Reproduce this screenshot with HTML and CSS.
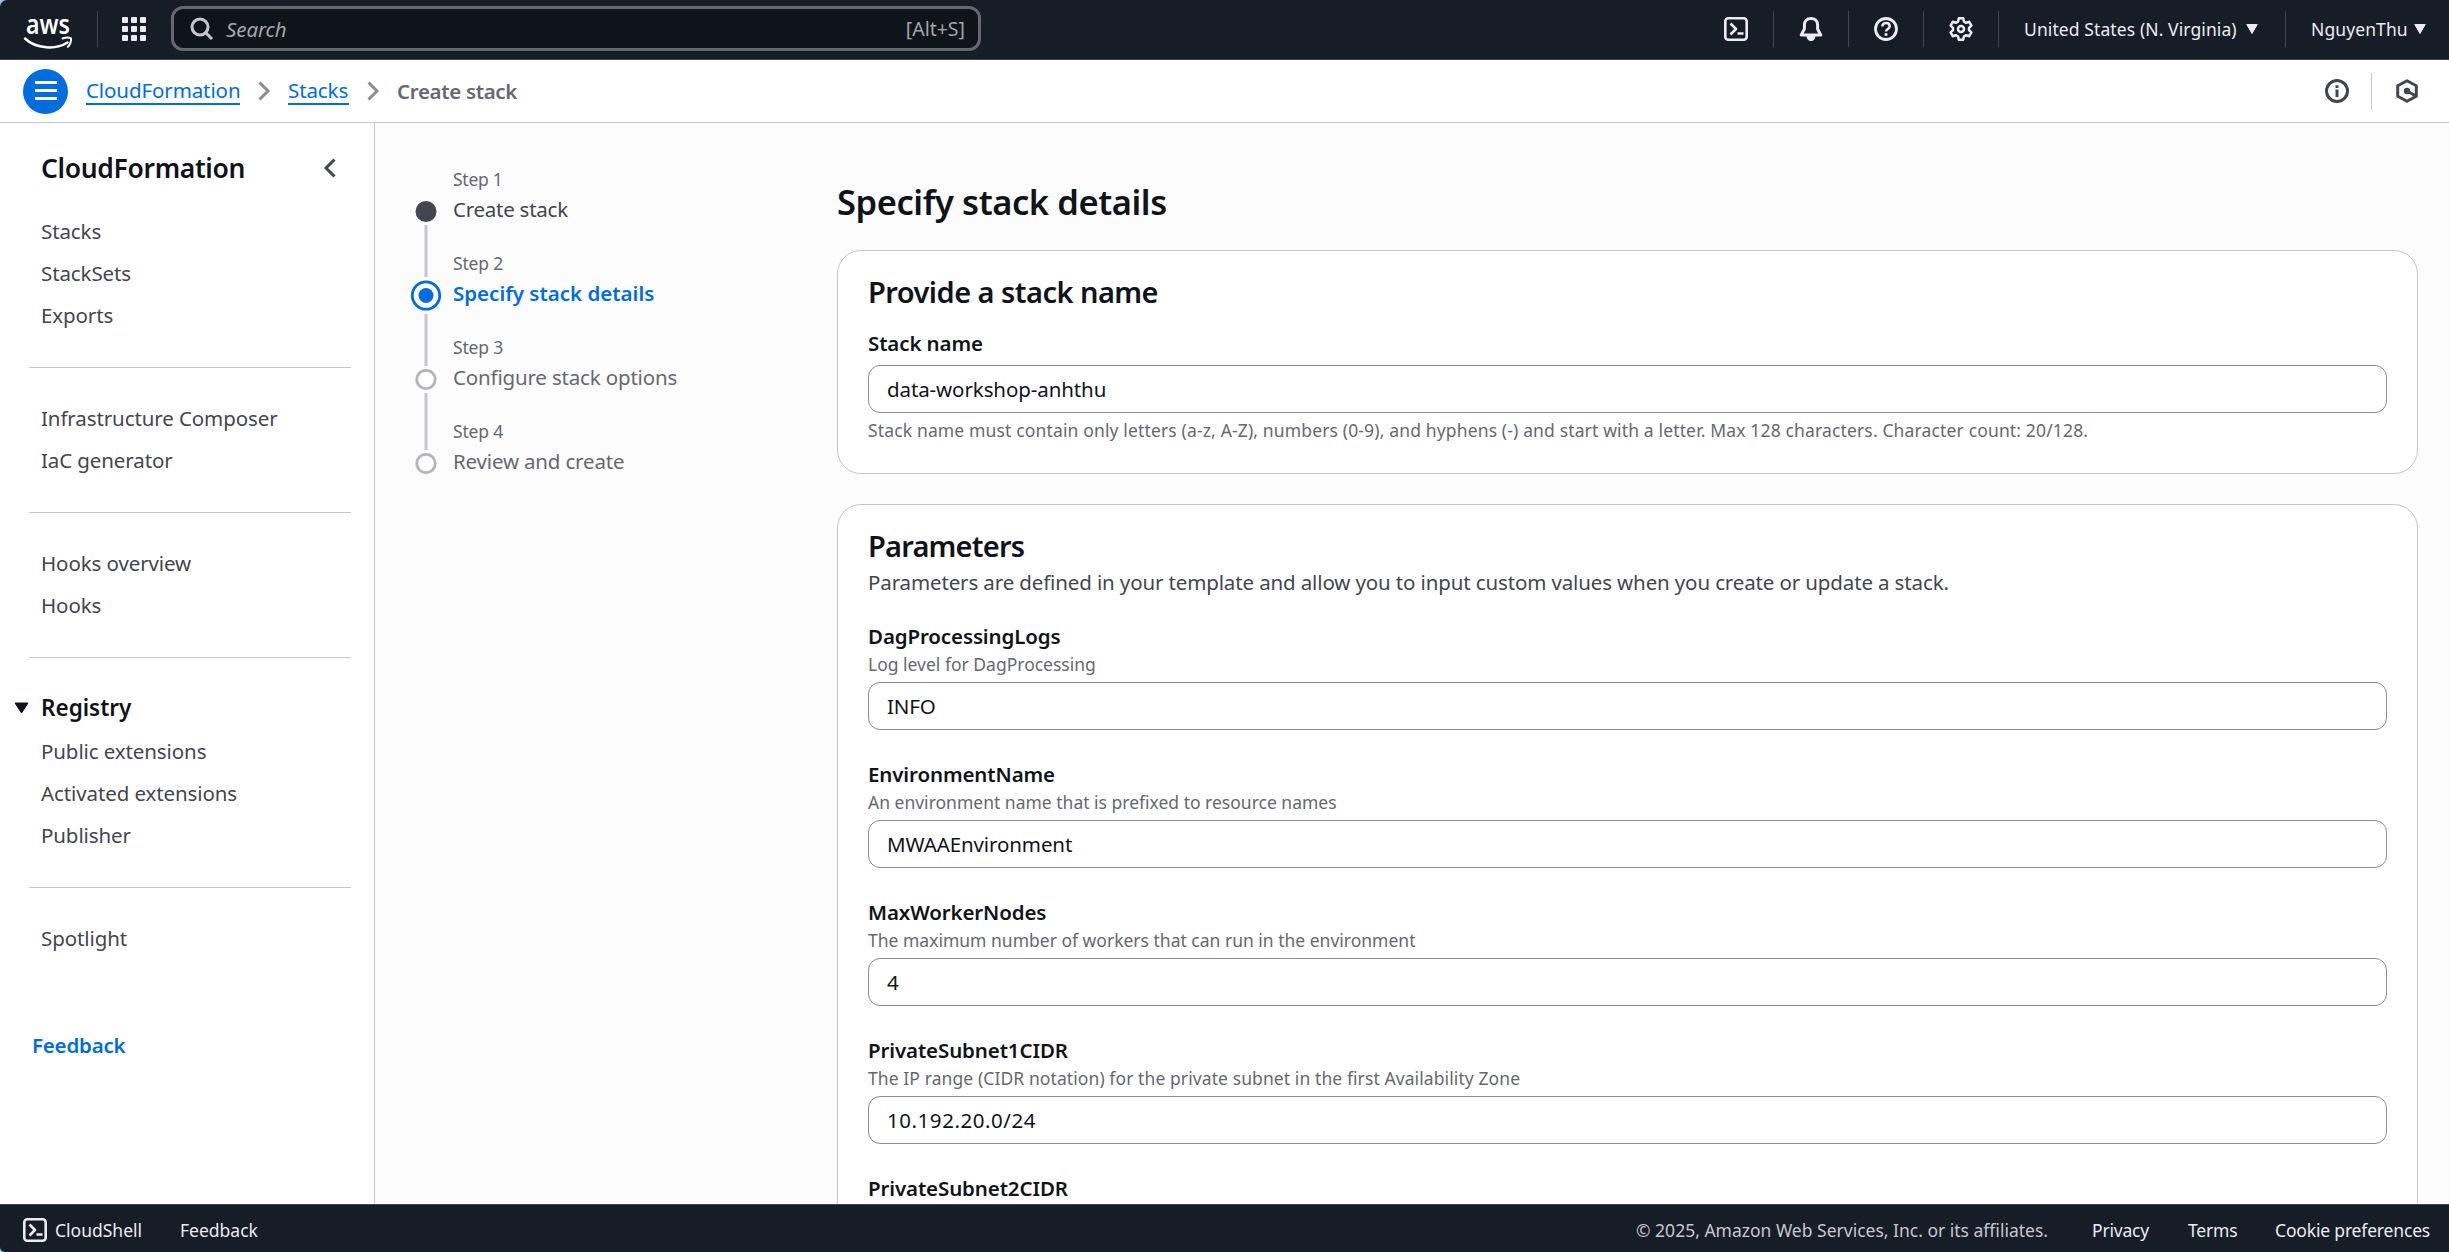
FILE: index.html
```html
<!DOCTYPE html>
<html lang="en">
<head>
<meta charset="utf-8">
<title>Specify stack details | CloudFormation</title>
<link rel="stylesheet" href="styles.css">
</head>
<body>
<header class="topbar">
  <a class="logo" aria-label="AWS">
    <svg width="50" height="36" viewBox="0 0 50 36"><text class="logo-text" x="3" y="22" textLength="44" lengthAdjust="spacingAndGlyphs">aws</text><path d="M2 26.5C13 37 33 38 44.500 30.500" fill="none" stroke="#fff" stroke-width="2.500" stroke-linecap="round"/><path d="M39.500 26.500C43 25.300 46 25.300 48 26.300C48.500 29 47 33 44.800 34.800" fill="none" stroke="#fff" stroke-width="2" stroke-linecap="round" stroke-linejoin="round"/></svg>
  </a>
  <span class="rule rule-logo"></span>
  <svg class="apps" width="24" height="24" viewBox="0 0 24 24" fill="#ebebf0"><rect width="6" height="6" rx="1"/><rect x="9" width="6" height="6" rx="1"/><rect x="18" width="6" height="6" rx="1"/><rect y="9" width="6" height="6" rx="1"/><rect x="9" y="9" width="6" height="6" rx="1"/><rect x="18" y="9" width="6" height="6" rx="1"/><rect y="18" width="6" height="6" rx="1"/><rect x="9" y="18" width="6" height="6" rx="1"/><rect x="18" y="18" width="6" height="6" rx="1"/></svg>
  <div class="search">
    <svg width="24" height="24" viewBox="0 0 24 24" fill="none" stroke="#c6c6cd" stroke-width="3"><circle cx="10" cy="10" r="8"/><path d="M15.500 15.500L22 22"/></svg>
    <span class="search-hint">Search</span>
    <span class="search-key">[Alt+S]</span>
  </div>
  <div class="tools">
    <svg width="24" height="24" viewBox="0 0 24 24" fill="none" stroke="#ebebf0" stroke-width="2.600" stroke-linejoin="round"><rect x="1.300" y="1.300" width="21.400" height="21.400" rx="3"/><path d="M6.500 6.500L12 12L6.500 17.500M13.500 16.500H19.500"/></svg>
    <span class="rule"></span>
    <svg width="24" height="24" viewBox="0 0 24 24"><path d="M12 1.500C7.800 1.500 5.400 4.300 5.400 8V12L2.200 18H21.800L18.600 12V8C18.600 4.300 16.200 1.500 12 1.500Z" fill="none" stroke="#ebebf0" stroke-width="3" stroke-linejoin="round"/><path d="M7.500 18.500H16.500C16.500 22 14.500 24 12 24S7.500 22 7.500 18.500Z" fill="#ebebf0"/></svg>
    <span class="rule"></span>
    <svg width="24" height="24" viewBox="0 0 24 24" fill="none" stroke="#ebebf0" stroke-width="2.800"><circle cx="12" cy="12" r="10.500"/><path d="M8.300 9.600C8.300 7.200 9.800 6.100 12 6.100S15.700 7.300 15.700 9.300C15.700 11.900 12 11.900 12 14.500" stroke-width="2.500"/><path d="M12 16.200V18.800" stroke-width="2.800"/></svg>
    <span class="rule"></span>
    <svg width="24" height="24" viewBox="0 0 24 24" fill="none" stroke="#ebebf0" stroke-width="2.500" stroke-linejoin="round"><path d="M9.800 1.300H14.200L14.900 4.500L17.100 5.800L20.200 4.800L22.400 8.600L20 10.800V13.200L22.400 15.400L20.200 19.200L17.100 18.200L14.900 19.500L14.200 22.700H9.800L9.100 19.500L6.900 18.200L3.800 19.200L1.600 15.400L4 13.200V10.800L1.600 8.600L3.800 4.800L6.900 5.800L9.100 4.500Z"/><circle cx="12" cy="12" r="3"/></svg>
    <span class="rule"></span>
    <span class="region">United States (N. Virginia)</span>
    <svg class="caret" width="12" height="10" viewBox="0 0 12 10"><path d="M.8.500H11.200L6 9.500Z" fill="#ebebf0" stroke="#ebebf0" stroke-linejoin="round"/></svg>
    <span class="rule rule-user"></span>
    <span class="user">NguyenThu</span>
    <svg class="caret" width="12" height="10" viewBox="0 0 12 10"><path d="M.8.500H11.200L6 9.500Z" fill="#ebebf0" stroke="#ebebf0" stroke-linejoin="round"/></svg>
  </div>
</header>

<div class="crumbbar">
  <span class="menu"><svg width="22" height="20" viewBox="0 0 22 20" fill="#fff"><rect width="22" height="3"/><rect y="8" width="22" height="3"/><rect y="16" width="22" height="3"/></svg></span>
  <nav class="crumbs">
    <a class="crumb-service">CloudFormation</a>
    <svg width="12" height="20" viewBox="0 0 12 20"><path d="M1.500 1.500L10 10L1.500 18.500" fill="none" stroke="#8c8c94" stroke-width="3"/></svg>
    <a class="crumb-stacks">Stacks</a>
    <svg width="12" height="20" viewBox="0 0 12 20"><path d="M1.500 1.500L10 10L1.500 18.500" fill="none" stroke="#8c8c94" stroke-width="3"/></svg>
    <b>Create stack</b>
  </nav>
  <svg class="info" width="24" height="24" viewBox="0 0 24 24" fill="none" stroke="#424650" stroke-width="3"><circle cx="12" cy="12" r="10.500"/><path d="M12 6.300V9M12 10.500V18"/></svg>
  <span class="rule-light"></span>
  <svg class="assist" width="24" height="24" viewBox="0 0 24 24" fill="none" stroke="#424650" stroke-width="3" stroke-linejoin="round"><path d="M12 1.700L21.300 6.700V17.300L12 22.300L2.700 17.300V6.700Z"/><path d="M12 12L21 17"/><circle cx="12" cy="12" r="3.200" fill="#424650" stroke="none"/></svg>
</div>

<div class="workspace">
  <aside class="sidebar">
    <div class="side-head"><h2>CloudFormation</h2><svg width="12" height="20" viewBox="0 0 12 20"><path d="M10.500 1.500L2 10L10.500 18.500" fill="none" stroke="#424650" stroke-width="3"/></svg></div>
    <ul><li>Stacks</li><li>StackSets</li><li>Exports</li></ul>
    <ul><li>Infrastructure Composer</li><li>IaC generator</li></ul>
    <ul><li>Hooks overview</li><li>Hooks</li></ul>
    <ul><li class="group"><svg width="15" height="12" viewBox="0 0 15 12"><path d="M1 1H14L7.500 11Z" fill="#0f141a" stroke="#0f141a" stroke-linejoin="round"/></svg>Registry</li><li>Public extensions</li><li>Activated extensions</li><li>Publisher</li></ul>
    <ul><li>Spotlight</li></ul>
    <a class="feedback">Feedback</a>
  </aside>

  <main>
    <ol class="steps">
      <li><svg width="34" height="84" viewBox="0 0 34 84"><path d="M17 58V110" stroke="#c6c6cd" stroke-width="3"/><circle cx="17" cy="44.500" r="10.500" fill="#424650"/></svg><div class="step done"><small>Step 1</small><span>Create stack</span></div></li>
      <li><svg width="34" height="84" viewBox="0 0 34 84"><path d="M17 63V115" stroke="#c6c6cd" stroke-width="3"/><circle cx="17" cy="44.500" r="13.700" fill="#fff" stroke="#006ce0" stroke-width="2.800"/><circle cx="17" cy="44.500" r="7.500" fill="#006ce0"/></svg><div class="step current"><small>Step 2</small><span>Specify stack details</span></div></li>
      <li><svg width="34" height="84" viewBox="0 0 34 84"><path d="M17 58V115" stroke="#c6c6cd" stroke-width="3"/><circle cx="17" cy="44.500" r="9.200" fill="#fff" stroke="#b4b4bb" stroke-width="2.800"/></svg><div class="step"><small>Step 3</small><span>Configure stack options</span></div></li>
      <li><svg width="34" height="84" viewBox="0 0 34 84"><circle cx="17" cy="44.500" r="9.200" fill="#fff" stroke="#b4b4bb" stroke-width="2.800"/></svg><div class="step"><small>Step 4</small><span>Review and create</span></div></li>
    </ol>
    <div class="content">
      <h1>Specify stack details</h1>
      <section class="card">
        <h3>Provide a stack name</h3>
        <div class="field name-field">
          <label>Stack name</label>
          <div class="input">data-workshop-anhthu</div>
          <p class="hint constraint">Stack name must contain only letters (a-z, A-Z), numbers (0-9), and hyphens (-) and start with a letter. Max 128 characters. Character count: 20/128.</p>
        </div>
      </section>
      <section class="card">
        <h3 class="tight">Parameters</h3>
        <p class="lead">Parameters are defined in your template and allow you to input custom values when you create or update a stack.</p>
        <div class="field"><label>DagProcessingLogs</label><p class="hint">Log level for DagProcessing</p><div class="input">INFO</div></div>
        <div class="field"><label>EnvironmentName</label><p class="hint">An environment name that is prefixed to resource names</p><div class="input">MWAAEnvironment</div></div>
        <div class="field"><label>MaxWorkerNodes</label><p class="hint">The maximum number of workers that can run in the environment</p><div class="input">4</div></div>
        <div class="field"><label>PrivateSubnet1CIDR</label><p class="hint spaced">The IP range (CIDR notation) for the private subnet in the first Availability Zone</p><div class="input numeric">10.192.20.0/24</div></div>
        <div class="field"><label>PrivateSubnet2CIDR</label></div>
      </section>
    </div>
  </main>
</div>

<footer class="footer">
  <svg width="24" height="24" viewBox="0 0 24 24" fill="none" stroke="#ebebf0" stroke-width="2.600" stroke-linejoin="round"><rect x="1.300" y="1.300" width="21.400" height="21.400" rx="3"/><path d="M6.500 6.500L12 12L6.500 17.500M13.500 16.500H19.500"/></svg>
  <span class="shell">CloudShell</span>
  <span class="foot-feedback">Feedback</span>
  <span class="copyright">© 2025, Amazon Web Services, Inc. or its affiliates.</span>
  <span class="privacy">Privacy</span>
  <span class="terms">Terms</span>
  <span class="cookies">Cookie preferences</span>
</footer>
</body>
</html>
```
FILE: styles.css
```css
* { box-sizing: border-box; margin: 0; padding: 0; }

body {
  display: flex;
  flex-direction: column;
  width: 2449px;
  height: 1252px;
  overflow: hidden;
  background: #9fc0e4;
  color: #0f141a;
  font: 400 20.5px/30px "Noto Sans", "Open Sans", sans-serif;
  letter-spacing: -0.1px;
  white-space: nowrap;
}

svg { display: block; flex: none; overflow: visible; }
ul, ol { list-style: none; }

/* Top navigation */
.topbar {
  display: flex;
  flex: none;
  align-items: center;
  height: 60px;
  padding: 0 23px 2px;
  background: #161d26;
  border-bottom: 1px solid #424650;
  border-top-left-radius: 7px;
  color: #ebebf0;
}
.logo { margin-top: 2px; }
.logo-text { fill: #fff; font-size: 27px; font-weight: 600; letter-spacing: 0; }
.rule { flex: none; width: 1px; height: 36px; background: #424650; }
.rule-logo { margin-left: 24px; }
.apps { margin-left: 24px; }
.search {
  display: flex;
  align-items: center;
  width: 810px;
  height: 45px;
  margin-left: 25px;
  padding: 0 13px 0 16px;
  background: #0f141a;
  border: 3px solid #656871;
  border-radius: 12px;
}
.search-hint { margin-left: 12px; color: #a4a4ad; font-style: italic; }
.search-key { margin-left: auto; color: #a4a4ad; font-size: 19.5px; letter-spacing: 0; }
.tools {
  display: flex;
  align-items: center;
  gap: 25px;
  margin-left: auto;
  font-size: 17.5px;
  letter-spacing: 0.1px;
}
.region { width: 213px; }
.caret { margin-left: -16px; }
.rule-user { margin-left: 2px; }
.user { width: 94px; }

/* Breadcrumbs */
.crumbbar {
  display: flex;
  flex: none;
  align-items: center;
  height: 63px;
  padding: 0 30px 0 23px;
  background: #fff;
  border-bottom: 1px solid #c6c6cd;
}
.menu {
  display: flex;
  align-items: center;
  justify-content: center;
  width: 45px;
  height: 45px;
  border-radius: 50%;
  background: #006ce0;
}
.crumbs { display: flex; align-items: center; margin-left: 18px; }
.crumbs a {
  height: 28px;
  line-height: 26px;
  border-bottom: 2px solid #006ce0;
  color: #006ce0;
}
.crumbs svg { margin: 0 18px; }
.crumb-service { width: 154px; }
.crumb-stacks { width: 61px; }
.crumbs b { color: #656871; font-weight: 600; letter-spacing: -0.33px; }
.info { margin-left: auto; }
.rule-light { width: 1px; height: 37px; margin: 0 23px 0 22px; background: #c6c6cd; }

/* Page body */
.workspace { display: flex; flex: 1; min-height: 0; background: #fcfcfd; }
.sidebar {
  flex: none;
  width: 375px;
  padding: 30px 24px 0 29px;
  background: #fff;
  border-right: 1px solid #c6c6cd;
  color: #424650;
}
.side-head {
  display: flex;
  align-items: center;
  justify-content: space-between;
  height: 30px;
  margin-bottom: 33px;
  padding: 0 14px 0 12px;
}
.side-head h2 { color: #0f141a; font-size: 26.5px; font-weight: 600; letter-spacing: -0.34px; }
.sidebar ul {
  display: flex;
  flex-direction: column;
  gap: 12px;
  padding-left: 12px;
}
.sidebar ul + ul { margin: 37px 0 0; padding-top: 35px; border-top: 1px solid #c6c6cd; margin-right: -1px; }
.sidebar ul + ul { padding-left: 0; }
.sidebar ul + ul li { padding-left: 12px; }
.sidebar ul + ul .group {
  display: flex;
  align-items: center;
  gap: 12px;
  margin-bottom: 1px;
  padding-left: 0;
  margin-left: -15px;
  color: #0f141a;
  font-size: 22.5px;
  font-weight: 600;
  letter-spacing: 0;
}
.feedback {
  display: block;
  margin: 77px 0 0 3px;
  color: #006ce0;
  font-weight: 600;
  letter-spacing: -0.2px;
}

main { display: flex; flex: 1; min-width: 0; padding: 44px 31px 0 34px; }

/* Wizard steps */
.steps { flex: none; width: 428px; }
.steps li { display: flex; gap: 10px; height: 84px; }
.step { display: flex; flex-direction: column; gap: 3px; color: #656871; letter-spacing: -0.17px; }
.step small { font-size: 17.5px; line-height: 24px; color: #656871; }
.done { color: #424650; letter-spacing: -0.25px; }
.current span { color: #006ce0; font-weight: 600; letter-spacing: 0; }

/* Form */
.content { flex: 1; min-width: 0; padding-top: 13px; }
h1 { margin-bottom: 26px; font-size: 34.5px; line-height: 44px; font-weight: 600; letter-spacing: -0.43px; }
.card {
  margin-bottom: 30px;
  padding: 23px 30px 31px;
  background: #fff;
  border: 1px solid #c6c6cd;
  border-radius: 24px;
}
h3 { font-size: 29px; line-height: 36px; font-weight: 600; letter-spacing: -0.54px; }
.tight { letter-spacing: -0.8px; }
.lead { margin: 3px 0 24px; color: #424650; letter-spacing: -0.13px; }
.name-field { padding-top: 18px; }
.field { margin-bottom: 29px; }
.name-field { margin-bottom: 0; }
label { display: block; font-weight: 600; letter-spacing: -0.12px; }
.hint { margin: 1px 0 6px; color: #656871; font-size: 17.5px; line-height: 24px; letter-spacing: 0; }
.constraint { margin: 5px 0 0; letter-spacing: 0.147px; }
.spaced { letter-spacing: 0.09px; }
.input {
  height: 48px;
  padding: 8px 18px;
  border: 1px solid #8c8c94;
  border-radius: 12px;
}
.name-field .input { margin-top: 7px; }
.numeric { letter-spacing: 0.55px; }

/* Footer */
.footer {
  display: flex;
  flex: none;
  align-items: center;
  height: 48px;
  padding: 6px 19px 4px 23px;
  background: #161d26;
  border-top: 1px solid #424650;
  border-bottom-left-radius: 5px;
  color: #ebebf0;
  font-size: 17.5px;
  letter-spacing: 0;
}
.shell { width: 88px; margin-left: 8px; }
.foot-feedback { margin-left: 37px; }
.copyright { width: 411px; margin-left: auto; color: #c6c6cd; }
.privacy { width: 58px; margin-left: 45px; letter-spacing: -0.2px; }
.terms { width: 49px; margin-left: 38px; letter-spacing: -0.2px; }
.cookies { width: 155px; margin-left: 38px; letter-spacing: -0.17px; }
```
